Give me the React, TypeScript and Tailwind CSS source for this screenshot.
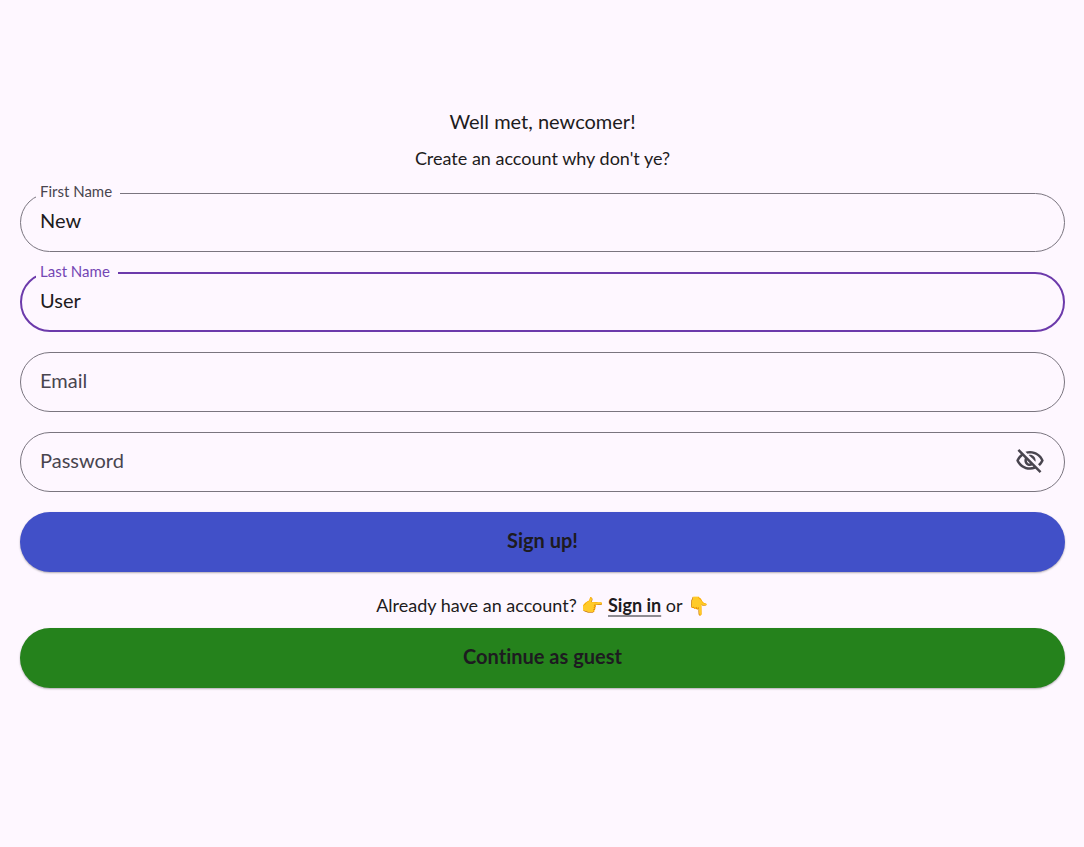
import React, { useState } from 'react';
import clsx from 'clsx';

type FieldName = 'firstName' | 'lastName' | 'email' | 'password';

interface TextFieldProps {
  id: FieldName;
  label: string;
  type?: string;
  value: string;
  active: boolean;
  onActivate: (id: FieldName) => void;
  onChange: (id: FieldName, value: string) => void;
  children?: React.ReactNode;
}

function TextField({ id, label, type = 'text', value, active, onActivate, onChange, children }: TextFieldProps) {
  const floating = active || value !== '';

  // The floating label is a legend, so the outline breaks around it.
  return (
    <fieldset
      className={clsx(
        'min-w-0 rounded-[30px]',
        floating ? '-mt-[9px] h-[69px]' : 'h-[60px]',
        active ? 'border-2 border-[#6c3aab]' : 'border border-[#7a757f]',
      )}
    >
      {floating && (
        <legend
          className={clsx(
            'h-5 pr-2 pl-1 text-[15px] leading-4',
            active ? 'ml-[14px] text-[#7446b4]' : 'ml-[15px] text-[#49454f]',
          )}
        >
          <label htmlFor={id}>{label}</label>
        </legend>
      )}
      <div className={clsx('flex items-center', floating ? 'h-9' : 'h-14', active ? 'px-[18px]' : 'px-[19px]')}>
        {!floating && (
          <label htmlFor={id} className="cursor-text pb-0.5 text-xl text-[#49454f]">
            {label}
          </label>
        )}
        <input
          id={id}
          type={type}
          value={value}
          onFocus={() => onActivate(id)}
          onChange={(e) => onChange(id, e.target.value)}
          className="min-w-0 flex-1 bg-transparent pb-0.5 text-xl text-[#1d1b20] outline-none"
        />
        {children}
      </div>
    </fieldset>
  );
}

function VisibilityOffIcon() {
  return (
    <svg viewBox="0 0 24 24" className="size-[30px]" fill="currentColor" aria-hidden="true">
      <path d="M12 6c3.79 0 7.17 2.13 8.82 5.5-.59 1.22-1.42 2.27-2.41 3.12l1.41 1.41c1.39-1.23 2.49-2.77 3.18-4.53C21.27 7.11 17 4 12 4c-1.27 0-2.49.2-3.64.57l1.65 1.65C10.66 6.09 11.32 6 12 6zm-1.07 1.14L13 9.21c.57.25 1.03.71 1.28 1.28l2.07 2.07c.08-.34.14-.7.14-1.07C16.5 9.01 14.48 7 12 7c-.37 0-.72.05-1.07.14zM2.01 3.87l2.68 2.68C3.06 7.83 1.77 9.53 1 11.5 2.73 15.89 7 19 12 19c1.52 0 2.98-.29 4.32-.82l3.42 3.42 1.41-1.41L3.42 2.45 2.01 3.87zm7.5 7.5l2.61 2.61c-.04.01-.08.02-.12.02-1.38 0-2.5-1.12-2.5-2.5 0-.05.01-.08.01-.13zm-3.4-3.4l1.75 1.75c-.23.55-.36 1.15-.36 1.78 0 2.48 2.02 4.5 4.5 4.5.63 0 1.23-.13 1.77-.36l.98.98c-.88.24-1.8.38-2.75.38-3.79 0-7.17-2.13-8.82-5.5.7-1.43 1.72-2.61 2.93-3.53z" />
    </svg>
  );
}

export default function App() {
  const [values, setValues] = useState<Record<FieldName, string>>({
    firstName: 'New',
    lastName: 'User',
    email: '',
    password: '',
  });
  const [activeField, setActiveField] = useState<FieldName>('lastName');
  const [showPassword, setShowPassword] = useState(false);

  const handleChange = (id: FieldName, value: string) => {
    setValues((prev) => ({ ...prev, [id]: value }));
  };

  const fieldProps = (id: FieldName) => ({
    id,
    value: values[id],
    active: activeField === id,
    onActivate: setActiveField,
    onChange: handleChange,
  });

  return (
    <main className="flex min-h-screen flex-col justify-center bg-[#fef7ff] pr-[19px] pb-[52px] pl-5 font-['Lato','Noto_Sans',sans-serif] text-[#1d1b20] [font-variant-ligatures:none]">
      <form onSubmit={(e) => e.preventDefault()}>
        <h1 className="text-center text-xl leading-7">Well met, newcomer!</h1>
        <p className="mt-[9px] text-center text-lg leading-7">Create an account why don't ye?</p>

        <div className="mt-5 flex flex-col gap-5">
          <TextField {...fieldProps('firstName')} label="First Name" />
          <TextField {...fieldProps('lastName')} label="Last Name" />
          <TextField {...fieldProps('email')} label="Email" type="email" />
          <TextField {...fieldProps('password')} label="Password" type={showPassword ? 'text' : 'password'}>
            <button
              type="button"
              aria-label="Toggle password visibility"
              onClick={() => setShowPassword(!showPassword)}
              className="text-[#49454f]"
            >
              <VisibilityOffIcon />
            </button>
          </TextField>
          <button
            type="submit"
            className="h-[60px] rounded-full bg-[#4150c8] pb-1 text-xl font-bold shadow-[0_1px_2px_rgba(0,0,0,0.3)]"
          >
            Sign up!
          </button>
        </div>

        <p className="mt-5 text-center text-lg leading-[26px]">
          Already have an account? 👉{' '}
          <a
            href="#signin"
            className="font-bold underline decoration-[#8e8b92] decoration-2 underline-offset-3 [text-decoration-skip-ink:none]"
          >
            Sign in
          </a>{' '}
          or 👇
        </p>

        <button
          type="button"
          className="mt-[10px] h-[60px] w-full rounded-full bg-[#25821c] pb-1 text-xl font-bold shadow-[0_1px_2px_rgba(0,0,0,0.3)]"
        >
          Continue as guest
        </button>
      </form>
    </main>
  );
}
